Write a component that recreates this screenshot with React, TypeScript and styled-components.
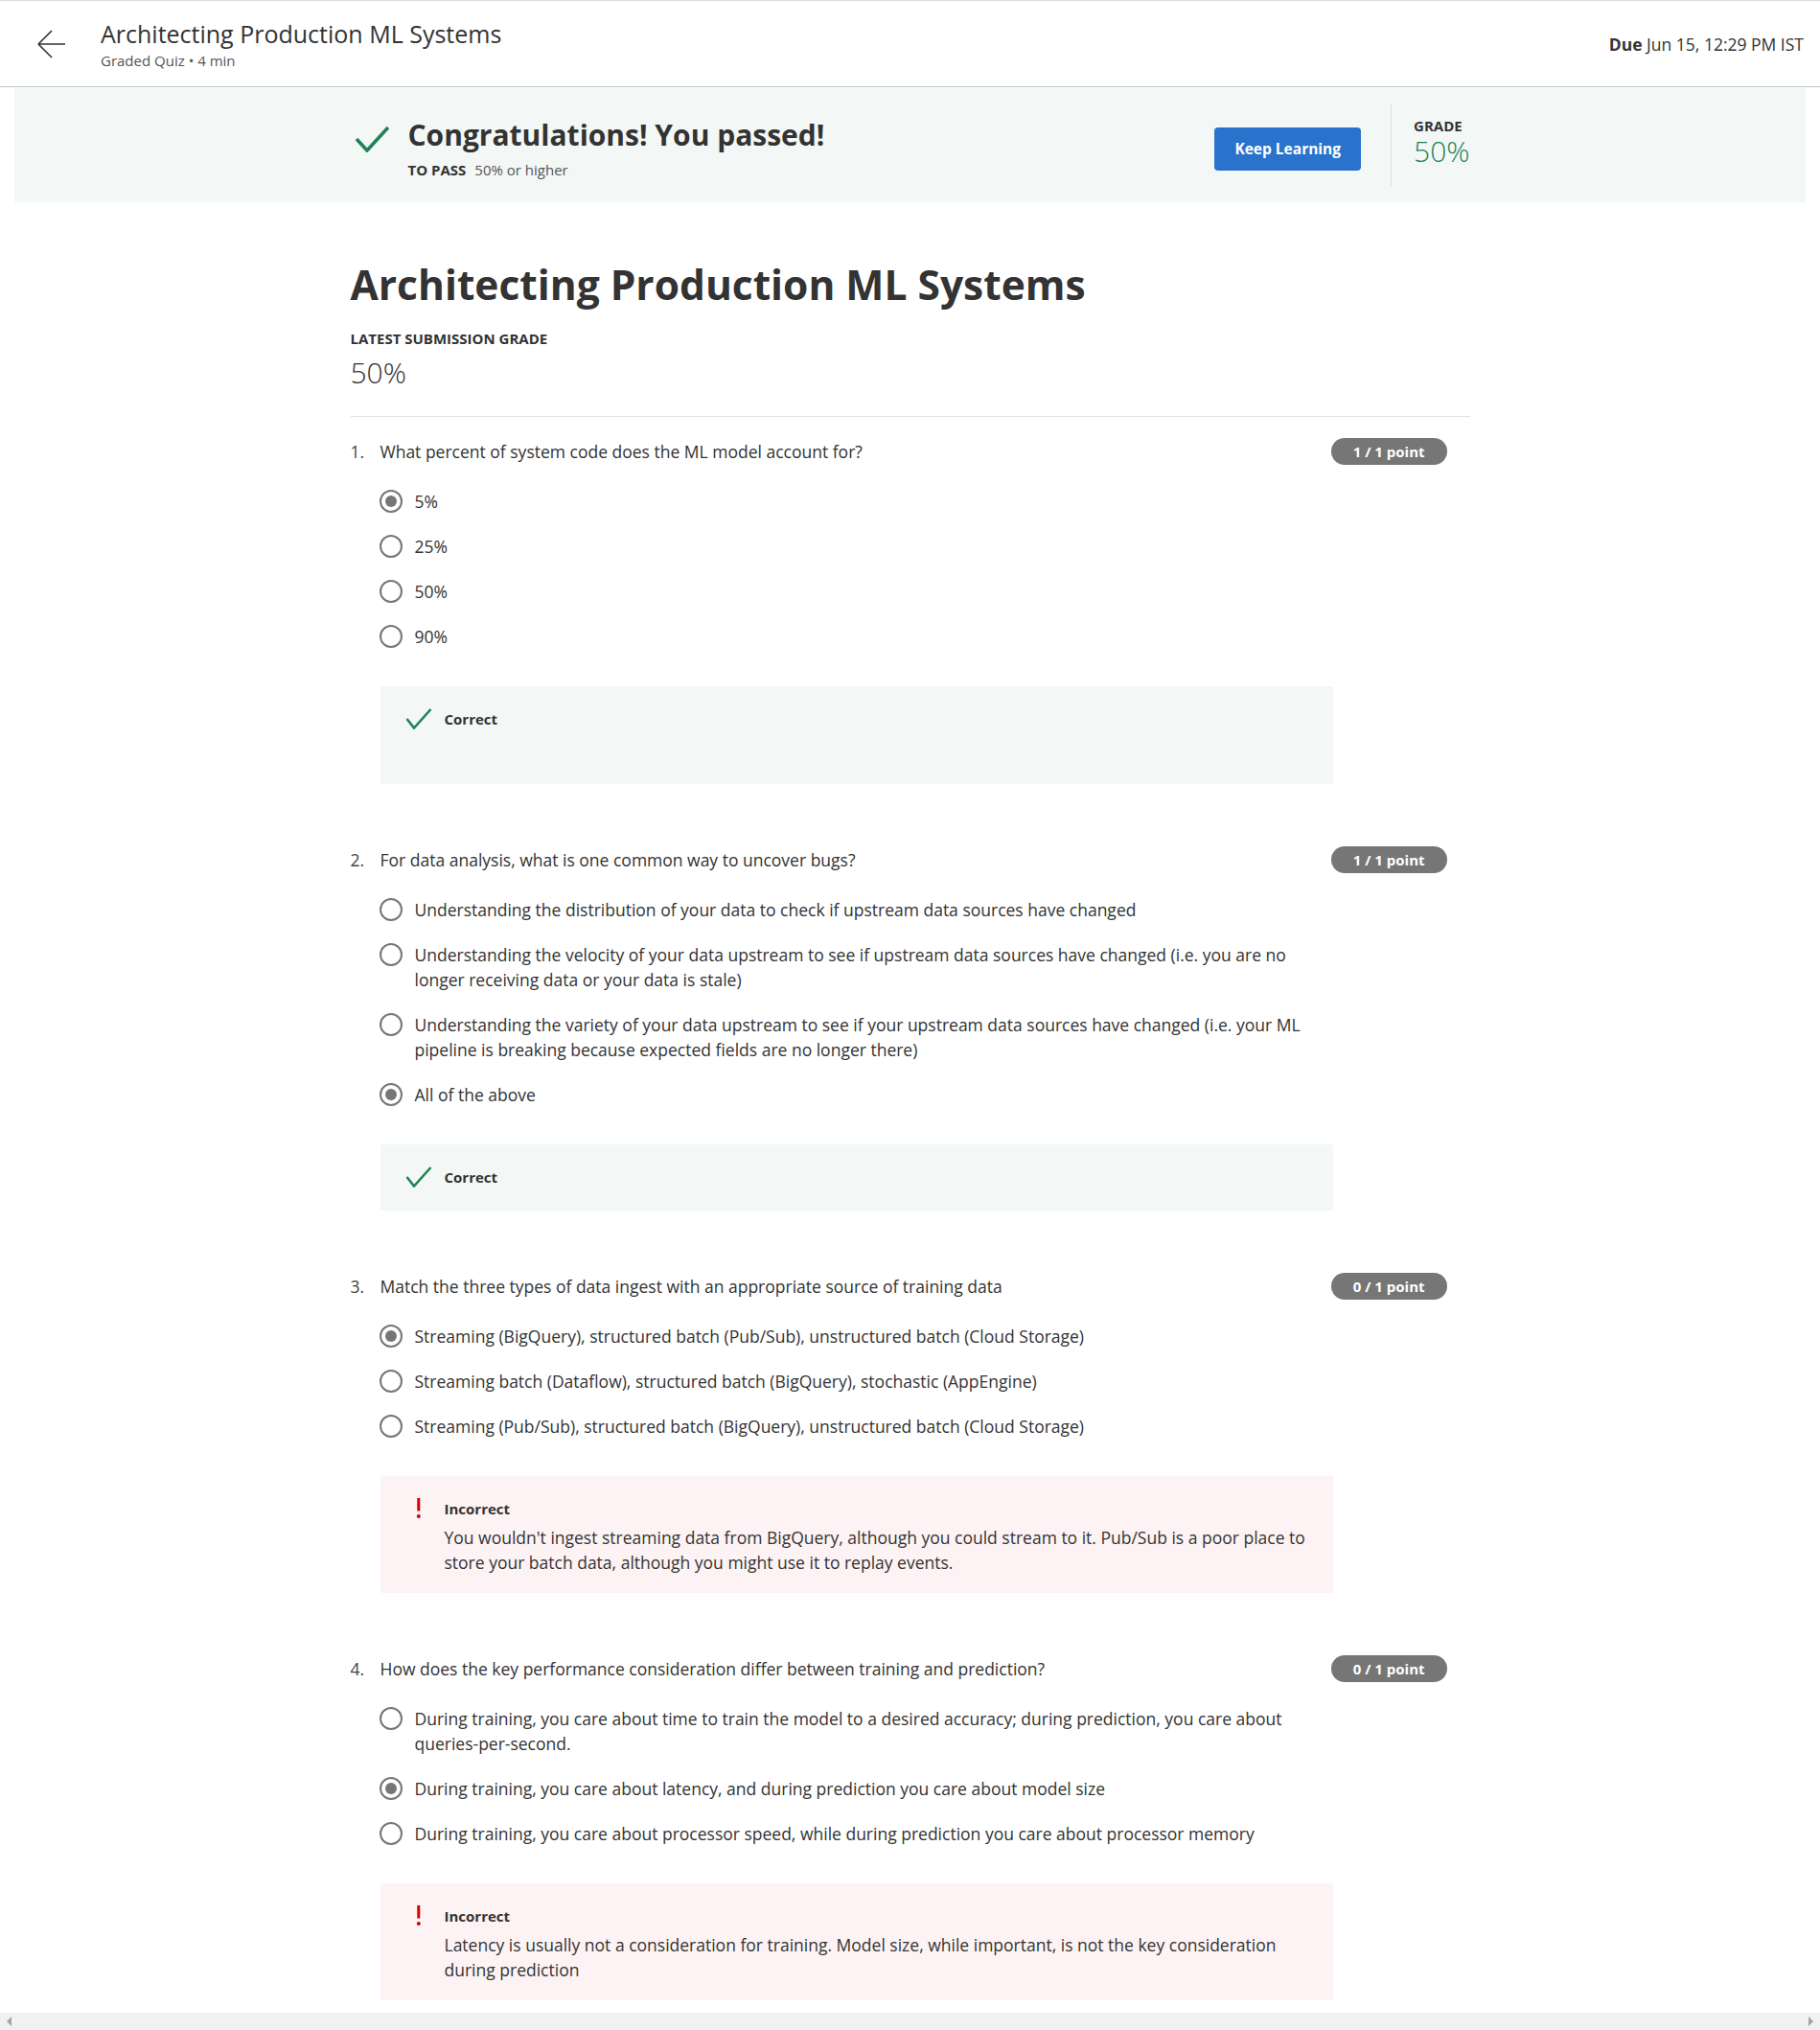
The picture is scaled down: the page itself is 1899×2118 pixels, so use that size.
import React from "react";
import styled, { createGlobalStyle } from "styled-components";

const GlobalStyle = createGlobalStyle`
  html, body { margin: 0; padding: 0; background: #fff; }
  body {
    font-family: "Open Sans", "Noto Sans", "Liberation Sans", Arial, sans-serif;
    color: #333;
  }
  * { box-sizing: border-box; }
`;

const Page = styled.div`
  min-height: 2118px;
  padding-bottom: 80px;
`;

/* ---------- Header ---------- */
const Header = styled.header`
  height: 91px;
  border-top: 1px solid #dcdcdc;
  border-bottom: 1px solid #c6c6c6;
  display: flex;
  align-items: center;
  padding: 0 17px 0 38px;
`;

const BackButton = styled.button`
  flex: none;
  width: 30px;
  height: 30px;
  padding: 0;
  border: 0;
  background: none;
  color: #333;
  display: flex;
  margin-top: 1px;
  cursor: pointer;
`;

const TitleBlock = styled.div`
  flex: 1;
  margin-left: 37px;
  display: flex;
  flex-direction: column;
`;

const HeaderTitle = styled.div`
  font-size: 25px;
  line-height: 32px;
  color: #333;
`;

const HeaderSub = styled.div`
  margin-top: 2px;
  font-size: 15px;
  line-height: 20px;
  color: #555;
`;

const Due = styled.div`
  font-size: 17.5px;
  color: #333;
  margin-top: 1px;
  b { font-weight: 700; }
`;

/* ---------- Banner ---------- */
const Banner = styled.section`
  margin: 1px 15px 0;
  height: 119px;
  background: #f3f8f7;
`;

const BannerInner = styled.div`
  max-width: 1168px;
  height: 100%;
  margin: 0 auto;
  display: flex;
  align-items: center;
  justify-content: space-between;
  padding-left: 4px;
`;

const PassGroup = styled.div`
  display: flex;
  align-items: flex-start;
  margin-top: 4px;
`;

const PassIcon = styled.svg`
  flex: none;
  width: 36px;
  height: 28px;
  margin-top: 10px;
  margin-right: 20px;
`;

const PassText = styled.div`
  display: flex;
  flex-direction: column;
`;

const PassTitle = styled.div`
  font-size: 30px;
  line-height: 40px;
  font-weight: 700;
  color: #333;
`;

const PassSub = styled.div`
  margin-top: 6px;
  font-size: 15px;
  line-height: 20px;
  color: #555;
  b { font-weight: 700; color: #333; margin-right: 9px; }
`;

const GradeGroup = styled.div`
  display: flex;
  align-items: center;
`;

const PrimaryButton = styled.button`
  height: 45px;
  padding: 0 21px;
  border: 0;
  border-radius: 4px;
  background: #2a73cc;
  color: #fff;
  font-family: inherit;
  font-size: 15.5px;
  font-weight: 700;
  margin-top: 7px;
  cursor: pointer;
`;

const VDivider = styled.div`
  width: 1px;
  height: 85px;
  background: #dedede;
  margin: 0 23px 0 31px;
`;

const GradeBox = styled.div`
  display: flex;
  flex-direction: column;
  margin-top: -7px;
`;

const SmallCaps = styled.div`
  font-size: 15px;
  line-height: 20px;
  font-weight: 700;
  color: #333;
  text-transform: uppercase;
`;

const BannerGrade = styled.div`
  font-size: 30px;
  line-height: 36px;
  font-weight: 300;
  color: #1f8354;
  margin-top: -1px;
`;

/* ---------- Main ---------- */
const Main = styled.main`
  max-width: 1168px;
  margin: 0 auto;
  padding-top: 59px;
`;

const H1 = styled.h1`
  margin: 0;
  font-size: 42.5px;
  line-height: 53px;
  font-weight: 700;
  color: #333;
`;

const SubmissionLabel = styled(SmallCaps)`
  margin-top: 20px;
`;

const SubmissionGrade = styled.div`
  margin-top: 6px;
  font-size: 30px;
  line-height: 40px;
  font-weight: 300;
  color: #333;
`;

const Rule = styled.hr`
  margin: 25px 0 0;
  border: 0;
  border-top: 1px solid #e1e1e1;
`;

const QuestionList = styled.div`
  margin-top: 22px;
  display: flex;
  flex-direction: column;
  gap: 65px;
`;

const QuestionBlock = styled.section``;

const QuestionRow = styled.div`
  display: flex;
  align-items: center;
  min-height: 28px;
  padding-right: 24px;
`;

const QNumber = styled.span`
  flex: none;
  width: 31px;
  font-size: 17.5px;
  line-height: 26px;
  color: #444;
`;

const QText = styled.div`
  flex: 1;
  font-size: 17.5px;
  line-height: 26px;
  color: #333;
`;

const PointBadge = styled.span`
  flex: none;
  height: 28px;
  padding: 0 23px;
  border-radius: 14px;
  background: #767676;
  color: #fff;
  font-size: 15px;
  font-weight: 700;
  line-height: 28px;
`;

const Options = styled.div`
  margin: 25px 0 0 31px;
  width: 994px;
  display: flex;
  flex-direction: column;
  gap: 21px;
`;

const Option = styled.label`
  display: flex;
  align-items: flex-start;
  gap: 13px;
`;

const Radio = styled.span<{ $checked?: boolean }>`
  flex: none;
  width: 24px;
  height: 24px;
  margin: 1px 0 0 -1px;
  border-radius: 50%;
  border: 2px solid #767676;
  display: flex;
  align-items: center;
  justify-content: center;
  &::after {
    content: "";
    width: 12px;
    height: 12px;
    border-radius: 50%;
    background: #767676;
    display: ${(p) => (p.$checked ? "block" : "none")};
  }
`;

const OptionText = styled.span`
  flex: 1;
  font-size: 17.5px;
  line-height: 26px;
  color: #333;
`;

const Feedback = styled.div<{ $correct: boolean }>`
  margin: 39px 0 0 31px;
  width: 994px;
  padding: 23px 26px 24px;
  background: ${(p) => (p.$correct ? "#f3f8f7" : "#fdf3f4")};
`;

const FeedbackHead = styled.div`
  display: flex;
  align-items: center;
  height: 22px;
`;

const FeedbackIcon = styled.svg`
  flex: none;
  width: 28px;
  height: 22px;
`;

const FeedbackLabel = styled.span`
  margin-left: 13px;
  font-size: 15px;
  line-height: 22px;
  font-weight: 700;
  color: #333;
`;

const Explanation = styled.p<{ $empty?: boolean }>`
  margin: 6px 0 -5px 41px;
  min-height: ${(p) => (p.$empty ? "32px" : "0")};
  font-size: 17.5px;
  line-height: 26px;
  color: #333;
`;

/* ---------- Fake horizontal scrollbar ---------- */
const ScrollBar = styled.div`
  position: fixed;
  left: 0;
  right: 0;
  bottom: 0;
  height: 18px;
  background: #f1f1f1;
  display: flex;
  align-items: center;
  justify-content: space-between;
  padding: 0 6px;
`;

const ScrollArrow = styled.svg`
  width: 8px;
  height: 10px;
`;

/* ---------- Data ---------- */
type Q = {
  text: string;
  points: string;
  options: string[];
  selected: number;
  correct: boolean;
  explanation?: string;
  emptyExplanation?: boolean;
};

const questions: Q[] = [
  {
    text: "What percent of system code does the ML model account for?",
    points: "1 / 1 point",
    options: ["5%", "25%", "50%", "90%"],
    selected: 0,
    correct: true,
    emptyExplanation: true,
  },
  {
    text: "For data analysis, what is one common way to uncover bugs?",
    points: "1 / 1 point",
    options: [
      "Understanding the distribution of your data to check if upstream data sources have changed",
      "Understanding the velocity of your data upstream to see if upstream data sources have changed (i.e. you are no longer receiving data or your data is stale)",
      "Understanding the variety of your data upstream to see if your upstream data sources have changed (i.e. your ML pipeline is breaking because expected fields are no longer there)",
      "All of the above",
    ],
    selected: 3,
    correct: true,
  },
  {
    text: "Match the three types of data ingest with an appropriate source of training data",
    points: "0 / 1 point",
    options: [
      "Streaming (BigQuery), structured batch (Pub/Sub), unstructured batch (Cloud Storage)",
      "Streaming batch (Dataflow), structured batch (BigQuery), stochastic (AppEngine)",
      "Streaming (Pub/Sub), structured batch (BigQuery), unstructured batch (Cloud Storage)",
    ],
    selected: 0,
    correct: false,
    explanation:
      "You wouldn't ingest streaming data from BigQuery, although you could stream to it. Pub/Sub is a poor place to store your batch data, although you might use it to replay events.",
  },
  {
    text: "How does the key performance consideration differ between training and prediction?",
    points: "0 / 1 point",
    options: [
      "During training, you care about time to train the model to a desired accuracy; during prediction, you care about queries-per-second.",
      "During training, you care about latency, and during prediction you care about model size",
      "During training, you care about processor speed, while during prediction you care about processor memory",
    ],
    selected: 1,
    correct: false,
    explanation:
      "Latency is usually not a consideration for training. Model size, while important, is not the key consideration during prediction",
  },
];

const CheckSmall = () => (
  <FeedbackIcon viewBox="0 0 28 22" aria-hidden>
    <path d="M1.5 11 L9 20.5 L26.5 1" fill="none" stroke="#1f8354" strokeWidth="2.6" />
  </FeedbackIcon>
);

const Bang = () => (
  <FeedbackIcon viewBox="0 0 28 22" aria-hidden>
    <rect x="12.3" y="0" width="3" height="13.5" fill="#d30001" />
    <circle cx="13.8" cy="19" r="2" fill="#d30001" />
  </FeedbackIcon>
);

export default function App() {
  return (
    <Page>
      <GlobalStyle />
      <Header>
        <BackButton aria-label="Back">
          <svg width="30" height="30" viewBox="0 0 30 30" fill="none" stroke="currentColor" strokeWidth="1.6">
            <path d="M2 15 L16 1 M2 15 L16 29 M2 15 H30" />
          </svg>
        </BackButton>
        <TitleBlock>
          <HeaderTitle>Architecting Production ML Systems</HeaderTitle>
          <HeaderSub>Graded Quiz • 4 min</HeaderSub>
        </TitleBlock>
        <Due>
          <b>Due</b> Jun 15, 12:29 PM IST
        </Due>
      </Header>

      <Banner>
        <BannerInner>
          <PassGroup>
            <PassIcon viewBox="0 0 36 28" aria-hidden>
              <path d="M2 14 L13 26 L35 2" fill="none" stroke="#1f8354" strokeWidth="3.6" />
            </PassIcon>
            <PassText>
              <PassTitle>Congratulations! You passed!</PassTitle>
              <PassSub>
                <b>TO PASS</b>50% or higher
              </PassSub>
            </PassText>
          </PassGroup>
          <GradeGroup>
            <PrimaryButton>Keep Learning</PrimaryButton>
            <VDivider />
            <GradeBox>
              <SmallCaps>Grade</SmallCaps>
              <BannerGrade>50%</BannerGrade>
            </GradeBox>
          </GradeGroup>
        </BannerInner>
      </Banner>

      <Main>
        <H1>Architecting Production ML Systems</H1>
        <SubmissionLabel>Latest Submission Grade</SubmissionLabel>
        <SubmissionGrade>50%</SubmissionGrade>
        <Rule />
        <QuestionList>
          {questions.map((q, qi) => (
            <QuestionBlock key={qi}>
              <QuestionRow>
                <QNumber>{qi + 1}.</QNumber>
                <QText>{q.text}</QText>
                <PointBadge>{q.points}</PointBadge>
              </QuestionRow>
              <Options>
                {q.options.map((o, oi) => (
                  <Option key={oi}>
                    <Radio $checked={oi === q.selected} />
                    <OptionText>{o}</OptionText>
                  </Option>
                ))}
              </Options>
              <Feedback $correct={q.correct}>
                <FeedbackHead>
                  {q.correct ? <CheckSmall /> : <Bang />}
                  <FeedbackLabel>{q.correct ? "Correct" : "Incorrect"}</FeedbackLabel>
                </FeedbackHead>
                {q.explanation && <Explanation>{q.explanation}</Explanation>}
                {q.emptyExplanation && <Explanation $empty />}
              </Feedback>
            </QuestionBlock>
          ))}
        </QuestionList>
      </Main>

      <ScrollBar>
        <ScrollArrow viewBox="0 0 8 10" aria-hidden>
          <path d="M6 0 L1 5 L6 10 Z" fill="#a3a3a3" />
        </ScrollArrow>
        <ScrollArrow viewBox="0 0 8 10" aria-hidden>
          <path d="M2 0 L7 5 L2 10 Z" fill="#a3a3a3" />
        </ScrollArrow>
      </ScrollBar>
    </Page>
  );
}
